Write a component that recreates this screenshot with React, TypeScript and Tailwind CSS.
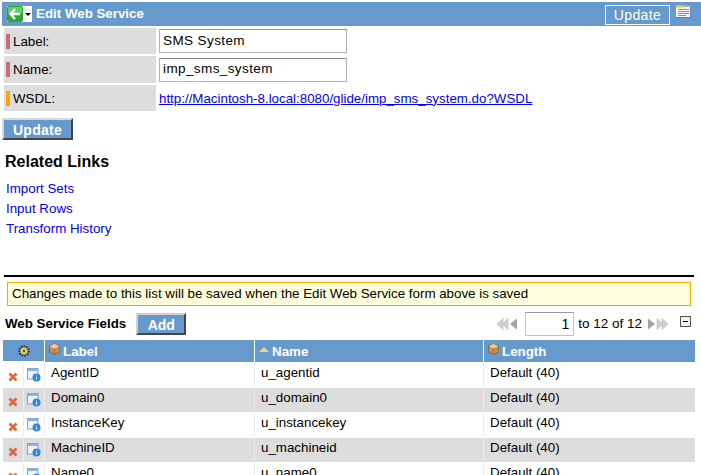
const font = { fontFamily: '"Liberation Sans", Arial, sans-serif' };

const rows = [
  { label: "AgentID", name: "u_agentid" },
  { label: "Domain0", name: "u_domain0" },
  { label: "InstanceKey", name: "u_instancekey" },
  { label: "MachineID", name: "u_machineid" },
  { label: "Name0", name: "u_name0" },
];

const BackIcon = () => (
  <svg width="16" height="16" viewBox="0 0 16 16">
    <rect width="16" height="16" rx="2" fill="#2fa82f" />
    <rect x="1" y="1" width="14" height="7" rx="1" fill="#5fd05f" />
    <path d="M8 3 L3.5 8 L8 13 M4 8 H13" fill="none" stroke="#fff" strokeWidth="2.4" />
  </svg>
);

const NotesIcon = () => (
  <svg width="15" height="13" viewBox="0 0 15 13">
    <rect x="0" y="0" width="15" height="12.5" fill="#f4f6fb" />
    <rect x="0" y="0" width="7" height="2.5" fill="#f0c040" />
    <rect x="7" y="0" width="8" height="2" fill="#a8a8a8" />
    <path d="M2 4.5 H13 M2 6.5 H13 M2 8.5 H13 M2 10.5 H10" stroke="#6c8fd8" strokeWidth="1" />
    <path d="M0 12.5 H15 M14.5 2 V12.5" stroke="#4468c0" strokeWidth="0.8" />
  </svg>
);

const CubeIcon = () => (
  <svg width="11" height="12" viewBox="0 0 11 12" className="shrink-0 -mt-[3px]">
    <path d="M5.5 0.5 L10.5 3 V9 L5.5 11.5 L0.5 9 V3 Z" fill="#c98f4f" stroke="#7d5a34" strokeWidth="0.7" />
    <path d="M0.8 3.2 L5.5 5.5 L10.2 3.2 L5.5 0.8 Z" fill="#eccb9c" />
    <path d="M5.5 5.5 V11.2" stroke="#7d5a34" strokeWidth="0.5" />
  </svg>
);

const GearIcon = () => (
  <svg width="12" height="12" viewBox="0 0 12 12">
    <circle cx="6" cy="6" r="4.8" fill="none" stroke="#222" strokeWidth="1.8" strokeDasharray="1.5 1.2" />
    <circle cx="6" cy="6" r="3.3" fill="#f3c93a" />
    <circle cx="6" cy="6" r="1.2" fill="#6d5a20" />
  </svg>
);

const DeleteIcon = () => (
  <svg width="10" height="10" viewBox="0 0 10 10">
    <path d="M1.5 1.5 L8.5 8.5 M8.5 1.5 L1.5 8.5" stroke="#dd6644" strokeWidth="2.8" />
  </svg>
);

const InfoIcon = () => (
  <svg width="14" height="14" viewBox="0 0 14 14">
    <rect x="0.5" y="0.5" width="10.5" height="10.5" fill="#eef3fb" stroke="#7b9fd6" />
    <rect x="0.5" y="0.5" width="10.5" height="2.5" fill="#8fb0e0" />
    <circle cx="9.5" cy="9.5" r="4" fill="#2f86e0" />
    <path d="M9.5 7.6 V8.3 M9.5 9.2 V11.6" stroke="#fff" strokeWidth="1.1" />
  </svg>
);

const PagerArrows = ({ flip }: { flip?: boolean }) => (
  <svg width="22" height="12" viewBox="0 0 22 12" className={flip ? "rotate-180" : ""}>
    <path d="M7 0.5 L1 6 L7 11.5 V0.5 Z" fill="#cfcfcf" stroke="#bdbdbd" strokeWidth="0.6" />
    <path d="M12 0.5 L6 6 L12 11.5 V0.5 Z" fill="#cfcfcf" stroke="#bdbdbd" strokeWidth="0.6" />
    <path d="M21 0.5 L14 6 L21 11.5 Z" fill="#a3a3a3" />
  </svg>
);

const FormRow = ({
  label,
  bar,
  tall,
  children,
}: {
  label: string;
  bar: string;
  tall?: boolean;
  children: React.ReactNode;
}) => (
  <div className={`flex items-stretch ${tall ? "h-[27px]" : "h-[26px]"}`}>
    <div className="w-[152px] bg-[#dddddd] flex items-center pl-[2px] text-[13.33px] text-black">
      <span className={`w-[4px] h-[15px] mr-[3px] ${bar}`} />
      <span className="mt-[1px]">{label}</span>
    </div>
    <div className="ml-[3px] flex items-center">{children}</div>
  </div>
);

const TextInput = ({ value }: { value: string }) => (
  <div className="w-[188px] h-[24px] bg-white border border-[#b5b5b5] border-t-[#8a8a8a] flex items-center pl-[3px] text-[13.5px] tracking-[0.4px] text-black">
    {value}
  </div>
);

const Th = ({ label, icon }: { label: string; icon: React.ReactNode }) => (
  <div className="bg-[#6699cc] flex items-center gap-[3px] pl-[4px] text-[13.33px] font-bold text-white border-l border-white">
    {icon}
    <span className="mt-[2px]">{label}</span>
  </div>
);

export default function App() {
  return (
    <div style={font} className="w-[701px] h-[475px] overflow-hidden bg-white pt-[2px] text-black">
      <div className="h-[24px] ml-[2px] bg-[#6699cc] flex items-center pl-[5px] pr-[10px]">
        <div className="w-[25px] h-[16px] bg-white flex items-center">
          <BackIcon />
          <span className="ml-[2px] w-0 h-0 border-x-[3px] border-x-transparent border-t-[3px] border-t-black" />
        </div>
        <span className="ml-[4px] text-[13.33px] font-bold text-white">Edit Web Service</span>
        <div className="ml-auto flex items-start mt-[2px]">
          <div className="w-[65px] h-[20px] border border-white text-white text-[14px] tracking-[0.4px] flex items-center justify-center">
            Update
          </div>
          <div className="ml-[6px]">
            <NotesIcon />
          </div>
        </div>
      </div>

      <div className="mt-[2px] ml-[4px] flex flex-col gap-[2px]">
        <FormRow label="Label:" bar="bg-[#c87070]">
          <TextInput value="SMS System" />
        </FormRow>
        <FormRow label="Name:" bar="bg-[#c87070]" tall>
          <TextInput value="imp_sms_system" />
        </FormRow>
        <FormRow label="WSDL:" bar="bg-[#ffa500]">
          <a className="mt-[1px] text-[13.33px] text-[#0000ee] underline">
            http://Macintosh-8.local:8080/glide/imp_sms_system.do?WSDL
          </a>
        </FormRow>
      </div>

      <button className="mt-[7px] ml-[2px] block w-[71px] h-[22px] bg-[#6699cc] border-2 border-[#d8d8d8] border-r-[#444444] border-b-[#444444] text-[14px] font-bold text-white tracking-[0.3px]">
        Update
      </button>

      <h2 className="mt-[12px] ml-[5px] text-[16px] leading-[20px] font-bold">Related Links</h2>
      <div className="mt-[7px] ml-[6px] flex flex-col text-[13.33px] leading-[20px] text-[#0000ee]">
        <a>Import Sets</a>
        <a>Input Rows</a>
        <a>Transform History</a>
      </div>

      <div className="mt-[36px] ml-[4px] w-[690px] h-[2px] bg-black" />
      <div className="mt-[5px] ml-[7px] w-[684px] h-[24px] bg-[#ffffdd] border border-[#ffa500] flex items-center pl-[4px] text-[13.33px]">
        Changes made to this list will be saved when the Edit Web Service form above is saved
      </div>

      <div className="mt-[7px] h-[22px] flex items-center">
        <span className="ml-[5px] text-[13.33px] font-bold">Web Service Fields</span>
        <button className="ml-[10px] w-[50px] h-[22px] bg-[#6699cc] border-2 border-[#d0d0d0] border-r-[#444444] border-b-[#444444] text-[14px] font-bold text-white">
          Add
        </button>
        <div className="ml-auto flex items-center mr-[10px]">
          <PagerArrows />
          <div className="ml-[7px] w-[49px] h-[24px] border border-[#c4c4c4] border-t-[#999999] flex items-center justify-end pr-[4px] text-[14px]">
            1
          </div>
          <span className="ml-[4px] text-[13.5px] whitespace-nowrap">to 12 of 12</span>
          <span className="ml-[5px] flex">
            <PagerArrows flip />
          </span>
          <div className="ml-[11px] w-[11px] h-[11px] border border-[#555555] bg-[#f2f2f2] flex items-center justify-center -mt-[5px]">
            <span className="w-[5px] h-[1px] bg-black" />
          </div>
        </div>
      </div>

      <div className="mt-[5px] ml-[3px] w-[692px] grid grid-cols-[41px_210px_229px_212px]">
        <div className="h-[21px] bg-[#6699cc] flex items-center justify-center">
          <GearIcon />
        </div>
        <Th label="Label" icon={<CubeIcon />} />
        <Th
          label="Name"
          icon={
            <span className="w-0 h-0 border-x-[5px] border-x-transparent border-b-[5px] border-b-[#e8d27a] -mt-[3px]" />
          }
        />
        <Th label="Length" icon={<CubeIcon />} />
      </div>

      <div className="ml-[3px] w-[692px] mt-[1px] flex flex-col text-[13.33px] leading-[20px]">
        {rows.map((row, i) => (
          <div
            key={row.label}
            className={`grid grid-cols-[20px_21px_210px_229px_212px] h-[25px] border-b border-white ${
              i % 2 === 1 ? "bg-[#dddddd]" : "bg-white"
            }`}
          >
            <div className="flex items-center justify-center pt-[5px]">
              <DeleteIcon />
            </div>
            <div className="flex items-center justify-center pt-[1px] border-l border-[#ececec]">
              <InfoIcon />
            </div>
            <div className="border-l border-[#ececec] pl-[6px]">{row.label}</div>
            <div className="border-l border-[#ececec] pl-[6px]">{row.name}</div>
            <div className="border-l border-[#ececec] pl-[6px]">Default (40)</div>
          </div>
        ))}
      </div>
    </div>
  );
}
